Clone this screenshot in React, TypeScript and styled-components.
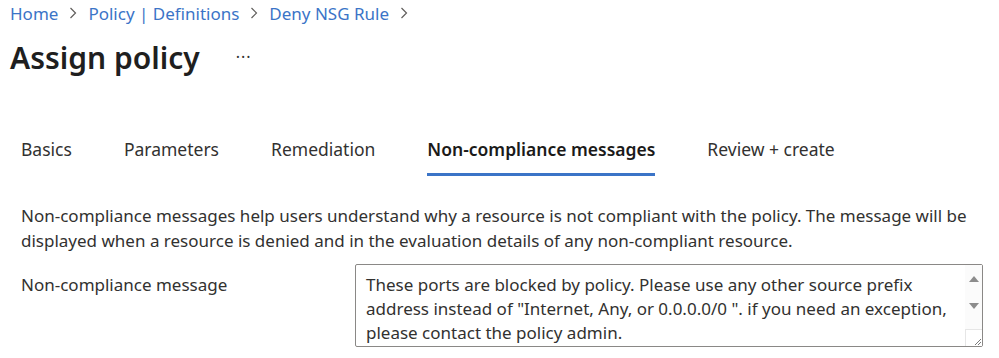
import React from "react"
import styled, { createGlobalStyle } from "styled-components"

const GlobalStyle = createGlobalStyle`
  html, body {
    margin: 0;
    padding: 0;
    background: #ffffff;
  }
  body {
    font-family: "Noto Sans", "Open Sans", sans-serif;
    color: #201f1e;
  }
`

const Page = styled.div`
  width: 999px;
  height: 358px;
  overflow: hidden;
  box-sizing: border-box;
  padding: 0 10px;
`

const Breadcrumb = styled.nav`
  display: flex;
  align-items: center;
  height: 26px;
  font-size: 17px;
`

const Crumb = styled.a`
  color: #3b74c7;
  text-decoration: none;
`

const Chevron = styled.span`
  display: inline-flex;
  margin: 0 11px;
`

const TitleRow = styled.div`
  display: flex;
  align-items: center;
  height: 62px;
`

const Title = styled.h1`
  margin: 0;
  font-size: 30px;
  font-weight: 600;
  color: #1f1f1f;
`

const More = styled.span`
  margin-left: 36px;
  font-size: 16px;
  color: #323130;
  letter-spacing: 1px;
`

const Tabs = styled.div`
  display: flex;
  margin-top: 43px;
  padding-left: 11px;
`

const Tab = styled.div<{ $active?: boolean }>`
  font-size: 17.5px;
  font-weight: ${(p) => (p.$active ? 600 : 400)};
  color: ${(p) => (p.$active ? "#1b1a19" : "#323130")};
  padding: 6px 0 12px;
  margin-right: 52px;
  border-bottom: 3px solid ${(p) => (p.$active ? "#3b74c7" : "transparent")};
`

const Description = styled.p`
  margin: 27px 0 0 11px;
  font-size: 17px;
  line-height: 25px;
  color: #323130;
`

const FieldRow = styled.div`
  display: flex;
  align-items: flex-start;
  margin: 11px 0 0 11px;
`

const Label = styled.label`
  width: 334px;
  font-size: 17px;
  color: #323130;
  padding-top: 9px;
`

const TextBox = styled.div`
  display: flex;
  width: 628px;
  height: 83px;
  box-sizing: border-box;
  border: 1px solid #8a8886;
  border-radius: 2px;
`

const BoxText = styled.div`
  flex: 1;
  padding: 8px 10px;
  font-size: 17px;
  line-height: 24px;
  color: #323130;
  white-space: nowrap;
`

const ScrollBar = styled.div`
  width: 17px;
  display: flex;
  flex-direction: column;
  align-items: center;
  background: #fbfbfb;
`

const ArrowSlot = styled.div`
  height: 14px;
  display: flex;
  align-items: center;
  justify-content: center;
  margin-top: 7px;
  & + & {
    margin-top: 13px;
  }
`

const Arrow = styled.div<{ $down?: boolean }>`
  width: 0;
  height: 0;
  border-left: 5px solid transparent;
  border-right: 5px solid transparent;
  ${(p) =>
    p.$down
      ? "border-top: 6px solid #8c8c8c;"
      : "border-bottom: 6px solid #8c8c8c;"}
`

const Corner = styled.div`
  margin-top: auto;
  width: 100%;
  height: 17px;
  box-sizing: border-box;
  border-top: 1px solid #e6e6e6;
  border-left: 1px solid #e6e6e6;
  background: #ffffff;
  display: flex;
  align-items: flex-end;
  justify-content: flex-end;
`

const ChevronIcon = () => (
  <svg width="8" height="12" viewBox="0 0 8 12">
    <path d="M1.5 1 L6.5 6 L1.5 11" fill="none" stroke="#605e5c" strokeWidth="1.2" />
  </svg>
)

const tabs = ["Basics", "Parameters", "Remediation", "Non-compliance messages", "Review + create"]

export default function App() {
  return (
    <>
      <GlobalStyle />
      <Page>
        <Breadcrumb>
          <Crumb>Home</Crumb>
          <Chevron><ChevronIcon /></Chevron>
          <Crumb>Policy | Definitions</Crumb>
          <Chevron><ChevronIcon /></Chevron>
          <Crumb>Deny NSG Rule</Crumb>
          <Chevron><ChevronIcon /></Chevron>
        </Breadcrumb>
        <TitleRow>
          <Title>Assign policy</Title>
          <More>···</More>
        </TitleRow>
        <Tabs>
          {tabs.map((t) => (
            <Tab key={t} $active={t === "Non-compliance messages"}>{t}</Tab>
          ))}
        </Tabs>
        <Description>
          Non-compliance messages help users understand why a resource is not compliant with the policy. The message will be
          <br />
          displayed when a resource is denied and in the evaluation details of any non-compliant resource.
        </Description>
        <FieldRow>
          <Label>Non-compliance message</Label>
          <TextBox>
            <BoxText>
              These ports are blocked by policy. Please use any other source prefix
              <br />
              address instead of "Internet, Any, or 0.0.0.0/0 ". if you need an exception,
              <br />
              please contact the policy admin.
            </BoxText>
            <ScrollBar>
              <ArrowSlot><Arrow /></ArrowSlot>
              <ArrowSlot><Arrow $down /></ArrowSlot>
              <Corner>
                <svg width="9" height="9" viewBox="0 0 9 9">
                  <path d="M8 2 L2 8 M8 5 L5 8" stroke="#7a7a7a" strokeWidth="1" />
                </svg>
              </Corner>
            </ScrollBar>
          </TextBox>
        </FieldRow>
      </Page>
    </>
  )
}
